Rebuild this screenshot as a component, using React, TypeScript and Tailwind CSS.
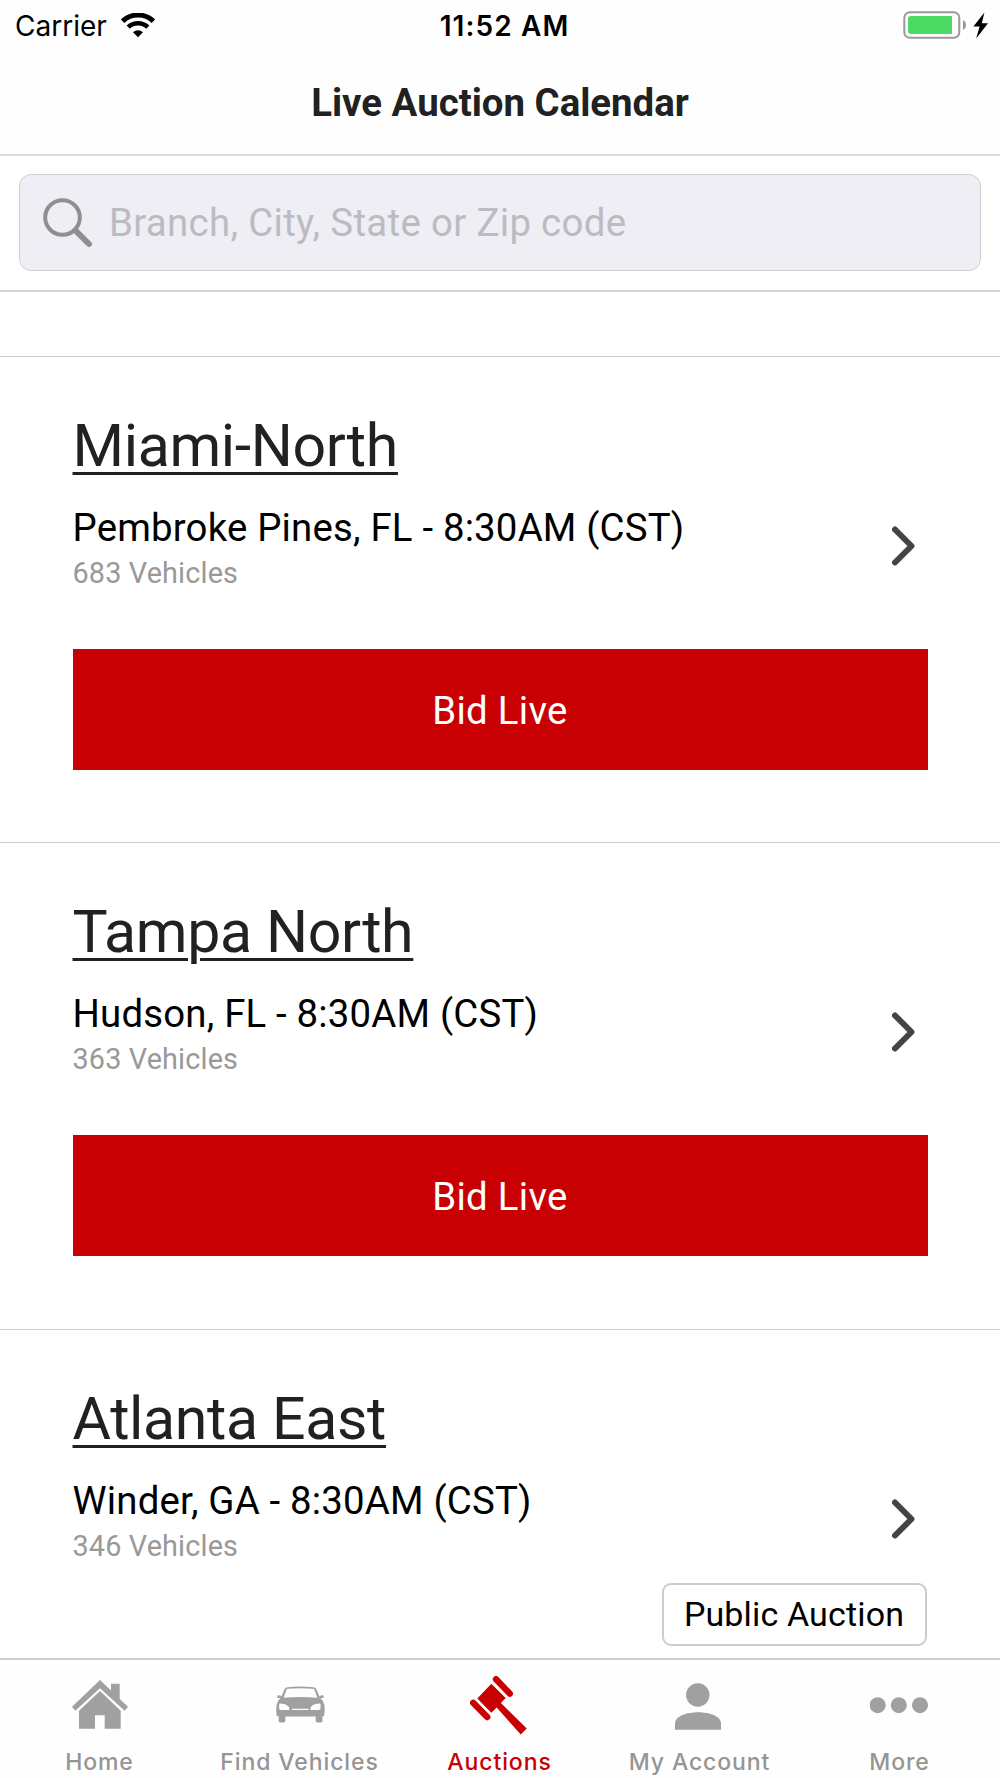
import React from 'react';

interface Auction {
  branch: string;
  location: string;
  vehicles: number;
  isPublic?: boolean;
}

const auctions: Auction[] = [
  { branch: 'Miami-North', location: 'Pembroke Pines, FL - 8:30AM (CST)', vehicles: 683 },
  { branch: 'Tampa North', location: 'Hudson, FL - 8:30AM (CST)', vehicles: 363 },
  { branch: 'Atlanta East', location: 'Winder, GA - 8:30AM (CST)', vehicles: 346, isPublic: true },
];

function WifiIcon() {
  return (
    <svg width="34" height="25" viewBox="0 0 34 25" fill="none">
      <path d="M1.6 8.2a22.3 22.3 0 0 1 30.8 0" stroke="#000" strokeWidth="5" />
      <path d="M7.2 14.2a14.2 14.2 0 0 1 19.6 0" stroke="#000" strokeWidth="4.6" />
      <path d="M17 24.2l-5-5a7.2 7.2 0 0 1 10 0z" fill="#000" />
    </svg>
  );
}

function BatteryIcon() {
  return (
    <svg width="86" height="28" viewBox="0 0 86 28">
      <rect x="1.3" y="1.3" width="55" height="25.4" rx="5.5" fill="#fff" stroke="#999" strokeWidth="2" />
      <path d="M8 5h41v18H8a3 3 0 0 1-3-3V8a3 3 0 0 1 3-3z" fill="#4cd964" />
      <path d="M60 9.3c4 1.6 4 8 0 9.6z" fill="#999" />
      <path d="M81.4 1.6L70.4 15.6h6.2L73.2 27.6 85 12.2h-6.2z" fill="#000" />
    </svg>
  );
}

function HomeIcon() {
  return (
    <svg width="60" height="60" viewBox="0 0 60 60" fill="currentColor">
      <path d="M30 4L2 30.7l3.3 4L30 12.3l24.7 22.4 3.3-4-8.3-7.7V7.7H41v6.8z" />
      <path d="M30 15L9 34.7v18h16V39.3h9.7v13.4h16v-18z" />
    </svg>
  );
}

function CarIcon() {
  return (
    <svg width="60" height="60" viewBox="0 0 60 60" fill="currentColor">
      <path
        fillRule="evenodd"
        d="M17.5 11.2Q30 10 43.5 11.2Q45.6 11.4 46.3 13L49.4 20.6Q51 19 53 19.3Q54 20 53.6 22H50.5Q53.8 25.2 54.5 29.5Q55 35 54 40.2H52.4V45Q52.4 46.4 51 46.4H47Q45.7 46.4 45.7 45V40.4H15.3V45Q15.3 46.4 14 46.4H10Q8.7 46.4 8.7 45V40.2H6.8Q5.8 35 6.4 29.5Q7 25.2 10.4 22H7.4Q7 20 8 19.3Q10 19 11.4 20.6L14.6 13Q15.4 11.4 17.5 11.2ZM16.6 13.4L13.6 21.8Q30 20.4 47.4 21.8L44.4 13.4Q44.2 12.8 43.4 12.7Q30 11.8 17.6 12.7Q16.8 12.8 16.6 13.4ZM10.2 27.6Q15.5 27.8 18.4 30.3Q19.6 31.4 19.2 34H10.6Q9.2 34 9.2 32.3V28.8Q9.2 27.6 10.2 27.6ZM49.6 27.6Q44.2 27.8 41.4 30.3Q40.2 31.4 40.6 34H49.2Q50.6 34 50.6 32.3V28.8Q50.6 27.6 49.6 27.6ZM22 32.8V34H38.6V32.8Z"
      />
    </svg>
  );
}

function GavelIcon() {
  return (
    <svg width="60" height="60" viewBox="0 0 60 60" fill="currentColor">
      <path d="M26 3.2L39.8 17.6M3.2 26.8L17.2 41" stroke="currentColor" strokeWidth="6.4" strokeLinecap="round" />
      <path d="M21.3 7.7L35.7 22l-4.8 5.1L56.7 52.5l-6 5.9-24-26.9-5.4 5.2L7.3 22.5z" />
    </svg>
  );
}

function AccountIcon() {
  return (
    <svg width="60" height="60" viewBox="0 0 60 60" fill="currentColor">
      <circle cx="27.8" cy="19" r="11.7" />
      <path d="M5 53.7V47.5C5 40 17 36.2 28 36.2S51 40 51 47.5v6.2z" />
    </svg>
  );
}

function MoreIcon() {
  return (
    <svg width="60" height="60" viewBox="0 0 60 60" fill="currentColor">
      <circle cx="7.7" cy="29.2" r="8" />
      <circle cx="28.8" cy="29.2" r="8" />
      <circle cx="50" cy="29.2" r="8" />
    </svg>
  );
}

const tabs = [
  { label: 'Home', icon: <HomeIcon /> },
  { label: 'Find Vehicles', icon: <CarIcon /> },
  { label: 'Auctions', icon: <GavelIcon />, active: true },
  { label: 'My Account', icon: <AccountIcon /> },
  { label: 'More', icon: <MoreIcon /> },
];

function AuctionCard({ branch, location, vehicles, isPublic }: Auction) {
  return (
    <li className="h-[486.3px] shrink-0 border-t border-[#cccccc] px-[72.5px] pt-[54px]">
      <h2 className="text-[59px] leading-[70px] tracking-[-0.35px] text-[#212121] underline decoration-[3px] underline-offset-[6px]">
        {branch}
      </h2>
      <div className="mt-6 flex justify-between">
        <div>
          <p className="text-[38.4px] leading-[46px] tracking-[0.18px] text-black">{location}</p>
          <p className="mt-1 text-[28.8px] leading-9 tracking-[0.15px] text-[#999999]">{vehicles} Vehicles</p>
        </div>
        <svg className="mt-[21px] mr-3" width="24" height="40" viewBox="0 0 24 40" fill="none">
          <path d="M3 3.5L19.5 20 3 36.5" stroke="#444" strokeWidth="6" strokeLinecap="round" strokeLinejoin="round" />
        </svg>
      </div>
      {isPublic ? (
        <div className="mt-[19px] mr-px flex justify-end">
          <span className="h-[63px] w-[265px] rounded-[9px] border-2 border-[#cccccc] text-center text-[34px] leading-[59px] tracking-[0.15px] text-black">
            Public Auction
          </span>
        </div>
      ) : (
        <button className="mt-[58px] h-[121px] w-full bg-[#c80004] pt-0.5 text-[38.4px] tracking-[0.3px] text-white">
          Bid Live
        </button>
      )}
    </li>
  );
}

export default function App() {
  return (
    <div className="flex h-[1778px] w-[1000px] flex-col overflow-hidden bg-white font-['Roboto',sans-serif]">
      <header className="h-[156px] shrink-0 border-b-2 border-[#dadada] bg-[#fefefe]">
        <div className="grid h-[50px] grid-cols-3 items-center pr-4 pl-[15px] font-['Inter',sans-serif] text-[28px]">
          <div className="flex items-center gap-3.5">
            <span className="pt-px">Carrier</span>
            <WifiIcon />
          </div>
          <span className="pt-px pl-2.5 text-center font-semibold tracking-[1.1px]">11:52 AM</span>
          <div className="-mr-[5px] flex justify-end">
            <BatteryIcon />
          </div>
        </div>
        <h1 className="text-center text-[38.4px] leading-[105px] font-bold text-[#212121]">Live Auction Calendar</h1>
      </header>

      <div className="h-[136px] shrink-0 border-b-2 border-[#d6d6d6] pt-[18px] pr-[19.5px] pl-[19px]">
        <div className="flex h-[97px] items-center rounded-xl border border-[#cfcfd2] bg-[#efeef4] pl-[23px]">
          <svg width="50" height="50" viewBox="0 0 50 50" fill="none" stroke="#8e8e93">
            <circle cx="19.5" cy="19.5" r="17.3" strokeWidth="4" />
            <path d="M32.5 32.5L46 46" strokeWidth="6" strokeLinecap="round" />
          </svg>
          <span className="ml-4 text-[38.4px] tracking-[0.33px] text-[#bbbbc3]">Branch, City, State or Zip code</span>
        </div>
      </div>

      <ul className="flex min-h-0 grow flex-col overflow-hidden pt-16">
        {auctions.map((a) => (
          <AuctionCard key={a.branch} {...a} />
        ))}
      </ul>

      <nav className="grid h-[120px] shrink-0 grid-cols-5 border-t-2 border-[#cccccc] bg-[#fefefe] font-['Inter',sans-serif]">
        {tabs.map((tab) => (
          <div
            key={tab.label}
            className={`flex flex-col items-center pt-4 ${tab.active ? 'text-[#c80004]' : 'text-[#a0a0a0]'}`}
          >
            {tab.icon}
            <span
              className={`mt-[11px] mr-px text-[23px] leading-[30px] font-medium tracking-[0.9px] whitespace-nowrap ${
                tab.active ? 'text-[#c80004]' : 'text-[#959595]'
              }`}
            >
              {tab.label}
            </span>
          </div>
        ))}
      </nav>
    </div>
  );
}
